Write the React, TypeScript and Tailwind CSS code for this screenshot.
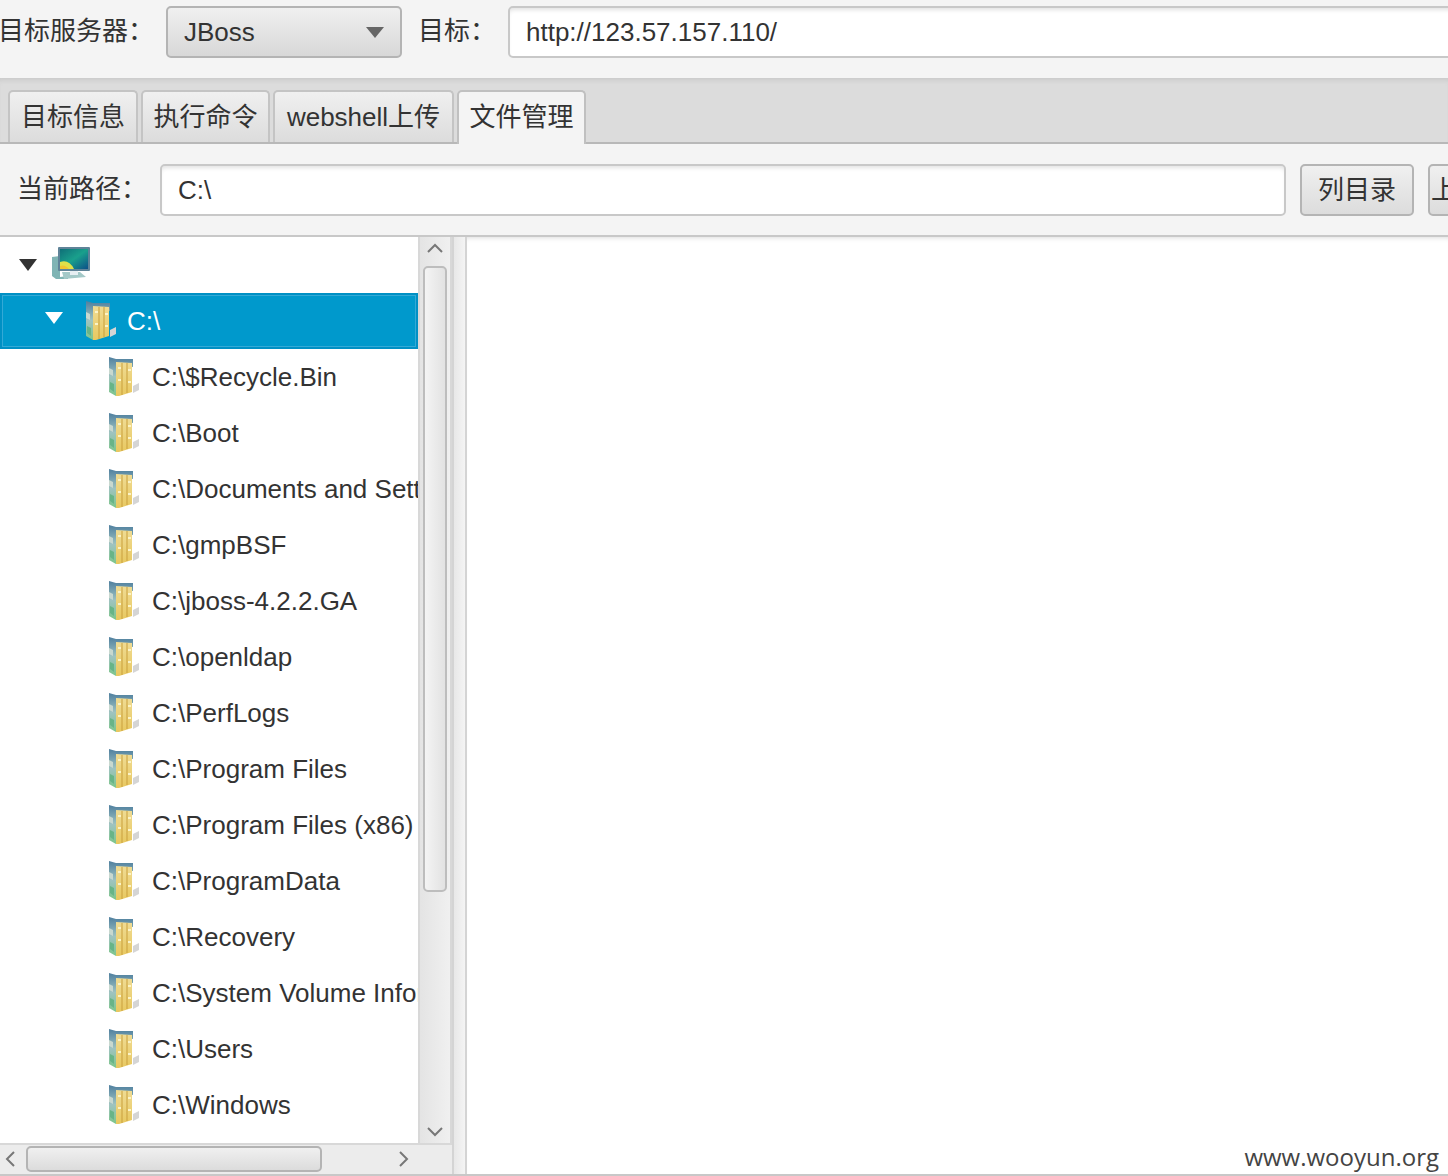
import React from "react";

const FONT = "font-['Liberation_Sans','Noto_Sans_CJK_SC',sans-serif]";

const folders = [
  "C:\\$Recycle.Bin",
  "C:\\Boot",
  "C:\\Documents and Settings",
  "C:\\gmpBSF",
  "C:\\jboss-4.2.2.GA",
  "C:\\openldap",
  "C:\\PerfLogs",
  "C:\\Program Files",
  "C:\\Program Files (x86)",
  "C:\\ProgramData",
  "C:\\Recovery",
  "C:\\System Volume Information",
  "C:\\Users",
  "C:\\Windows",
];

function FolderIcon({ id }: { id: string }) {
  return (
    <svg width="34" height="42" viewBox="0 0 34 42" className="shrink-0 blur-[0.6px]">
      <defs>
        <linearGradient id={`side${id}`} x1="0" y1="0" x2="0" y2="1">
          <stop offset="0" stopColor="#4f7f9f" />
          <stop offset="0.5" stopColor="#9fc3c0" />
          <stop offset="1" stopColor="#7cc58a" />
        </linearGradient>
        <linearGradient id={`body${id}`} x1="0" y1="0" x2="0" y2="1">
          <stop offset="0" stopColor="#f0dc94" />
          <stop offset="1" stopColor="#e8c860" />
        </linearGradient>
      </defs>
      <path d="M27 30 L33 27 L33 34 L27 37 Z" fill="#d5d5d5" />
      <path d="M3 1 L10 3 L27 3 L27 11 L10 8 L10 40 L3 36 Z" fill={`url(#side${id})`} />
      <path d="M10 6 L26 7 L26 36 L13 40 L10 40 Z" fill={`url(#body${id})`} />
      <path d="M16 7 L16 39 M21 7 L21 37" stroke="#c99f3c" strokeWidth="1" fill="none" />
      <path d="M12 12 L15 12 M22 14 L25 14 M12 24 L15 24 M22 26 L25 26" stroke="#fbf3c8" strokeWidth="2" />
      <path d="M3 12 L7 14 L7 20 L3 18 Z" fill="#c8d8cf" />
      <path d="M4 26 L8 28 L8 36 L4 33 Z" fill="#68b487" />
    </svg>
  );
}

function ComputerIcon() {
  return (
    <svg width="42" height="38" viewBox="0 0 42 38" className="shrink-0 blur-[0.5px]">
      <defs>
        <linearGradient id="screen" x1="0" y1="0" x2="1" y2="1">
          <stop offset="0" stopColor="#0f6f78" />
          <stop offset="0.5" stopColor="#1aa08c" />
          <stop offset="1" stopColor="#0c4f88" />
        </linearGradient>
      </defs>
      <path d="M2 12 L10 11 L10 32 L18 31 L18 34 L6 34 L2 31 Z" fill="#7fb4b4" />
      <path d="M12 27 L30 27 L36 32 L14 34 Z" fill="#a4c9c8" />
      <rect x="20" y="25" width="8" height="5" fill="#e6eef2" />
      <rect x="8" y="2" width="32" height="24" rx="1" fill="#5f8398" />
      <rect x="10" y="4" width="28" height="20" fill="url(#screen)" />
      <path d="M10 17 Q19 14 24 24 L10 24 Z" fill="#dfe04a" />
      <path d="M10 21 Q15 19 19 24 L10 24 Z" fill="#f2c530" />
    </svg>
  );
}

function Tri({ white }: { white?: boolean }) {
  return (
    <svg width="18" height="12" viewBox="0 0 18 12" className="shrink-0">
      <path d="M0 0 H18 L9 12 Z" fill={white ? "#ffffff" : "#333333"} />
    </svg>
  );
}

function Chevron({ d }: { d: string }) {
  return (
    <svg width="18" height="18" viewBox="0 0 18 18" className="shrink-0">
      <path d={d} fill="none" stroke="#777777" strokeWidth="2" />
    </svg>
  );
}

function TextInput({ value, className }: { value: string; className: string }) {
  return (
    <div
      className={`flex h-[52px] items-center rounded-[5px] border-2 border-[#c8c8c8] bg-white pl-4 text-[#333] shadow-[inset_0_4px_4px_-2px_#e2e2e2] ${className}`}
    >
      {value}
    </div>
  );
}

function Tab({ label, active, w }: { label: string; active?: boolean; w: string }) {
  return (
    <div
      className={`flex items-center justify-center rounded-t-[5px] border-2 text-[#333] ${w} ${
        active
          ? "z-10 -mb-[2px] h-[54px] border-[#c0c0c0] border-b-0 bg-[#f4f4f4] pb-[2px]"
          : "h-[52px] border-[#c4c4c4] border-b-0 bg-gradient-to-b from-[#f0f0f0] to-[#dcdcdc]"
      }`}
    >
      {label}
    </div>
  );
}

export default function App() {
  return (
    <div className={`flex h-[1176px] w-[1448px] flex-col overflow-hidden bg-[#f4f4f4] text-[26px] leading-none ${FONT}`}>
      {/* target row */}
      <div className="flex h-[78px] shrink-0 items-start pt-[6px]">
        <div className="flex h-[52px] w-[166px] shrink-0 items-center overflow-hidden whitespace-nowrap pb-[2px] text-[#333]">
          <span className="-ml-[2px]">目标服务器：</span>
        </div>
        <div className="flex h-[52px] w-[236px] shrink-0 items-center justify-between rounded-[5px] border-2 border-[#b4b4b4] bg-gradient-to-b from-[#f0f0f0] to-[#d8d8d8] pl-4 pr-[16px] text-[#333]">
          JBoss
          <svg width="18" height="11" viewBox="0 0 18 11">
            <path d="M0 0 H18 L9 11 Z" fill="#666666" />
          </svg>
        </div>
        <div className="flex h-[52px] w-[106px] shrink-0 items-center whitespace-nowrap pb-[2px] pl-4 text-[#333]">目标：</div>
        <TextInput value="http://123.57.157.110/" className="w-[960px] shrink-0" />
      </div>

      {/* tab strip */}
      <div className="flex h-[66px] shrink-0 items-end gap-[3px] border-b-2 border-[#b8b8b8] bg-[#dcdcdc] pl-2 shadow-[inset_0_5px_5px_-3px_#c8c8c8]">
        <Tab label="目标信息" w="w-[130px]" />
        <Tab label="执行命令" w="w-[129px]" />
        <Tab label="webshell上传" w="w-[181px]" />
        <Tab label="文件管理" w="w-[129px]" active />
      </div>

      {/* path row */}
      <div className="flex h-[93px] shrink-0 items-start border-b-2 border-[#c8c8c8] pt-[20px]">
        <div className="flex h-[52px] w-[160px] shrink-0 items-center whitespace-nowrap pb-[2px] pl-[17px] text-[#333]">当前路径：</div>
        <TextInput value="C:\" className="w-[1126px] shrink-0" />
        <div className="ml-[14px] flex h-[52px] w-[114px] shrink-0 items-center justify-center rounded-[5px] border-2 border-[#b4b4b4] bg-gradient-to-b from-[#f0f0f0] to-[#dcdcdc] text-[#333]">
          列目录
        </div>
        <div className="ml-[14px] flex h-[52px] w-[114px] shrink-0 items-center rounded-[5px] border-2 border-[#b4b4b4] bg-gradient-to-b from-[#f0f0f0] to-[#dcdcdc] pl-[1px] text-[#333]">
          上传
        </div>
      </div>

      {/* split panes */}
      <div className="flex min-h-0 flex-1 border-b-2 border-[#c8c8c8]">
        <div className="flex w-[452px] shrink-0 flex-col">
          <div className="flex min-h-0 flex-1">
            {/* tree */}
            <div className="w-[418px] shrink-0 overflow-hidden bg-white text-[#333]">
              <div className="flex h-[56px] items-center pl-[19px]">
                <Tri />
                <span className="ml-[13px] -mt-[2px]"><ComputerIcon /></span>
              </div>
              <div className="flex h-[56px] items-center border-2 border-[#0090c4] bg-[#0099cc] pl-[43px] text-white shadow-[inset_0_0_0_1px_#33a9d6]">
                <span className="-mt-[6px]"><Tri white /></span>
                <span className="ml-[20px]"><FolderIcon id="root" /></span>
                <span className="ml-[10px] whitespace-nowrap">C:\</span>
              </div>
              {folders.map((f, i) => (
                <div key={f} className="flex h-[56px] items-center overflow-hidden whitespace-nowrap pl-[106px]">
                  <FolderIcon id={String(i)} />
                  <span className="ml-[12px]">{f}</span>
                </div>
              ))}
            </div>
            {/* vertical scrollbar */}
            <div className="flex w-[34px] shrink-0 flex-col items-center border-x-2 border-[#d8d8d8] bg-gradient-to-r from-[#e4e4e4] to-[#f0f0f0] pt-[3px]">
              <Chevron d="M2 12 L9 5 L16 12" />
              <div className="mt-[8px] h-[626px] w-[24px] shrink-0 rounded-[5px] border-2 border-[#bdbdbd] bg-gradient-to-r from-[#f4f4f4] to-[#e2e2e2]" />
              <div className="mt-auto mb-[3px]">
                <Chevron d="M2 6 L9 13 L16 6" />
              </div>
            </div>
          </div>
          {/* horizontal scrollbar */}
          <div className="flex h-[31px] shrink-0 items-center border-t-2 border-[#d8d8d8] bg-[#ececec] pb-[1px]">
            <span className="ml-[1px]"><Chevron d="M13 2 L6 9 L13 16" /></span>
            <div className="ml-[7px] h-[26px] w-[296px] shrink-0 rounded-[5px] border-2 border-[#b4b4b4] bg-gradient-to-b from-[#f0f0f0] to-[#dcdcdc]" />
            <span className="ml-[73px]"><Chevron d="M5 2 L12 9 L5 16" /></span>
          </div>
        </div>
        {/* divider */}
        <div className="w-[15px] shrink-0 border-l-2 border-r-2 border-[#d4d4d4] bg-gradient-to-r from-[#e8e8e8] to-[#f4f4f4]" />
        {/* right pane */}
        <div className="relative min-w-0 flex-1 bg-white shadow-[inset_0_5px_5px_-4px_#dddddd]">
          <span className="absolute bottom-[2px] right-[9px] font-['Open_Sans',sans-serif] text-[24px] leading-[30px] text-[#444]">
            www.wooyun.org
          </span>
        </div>
      </div>
    </div>
  );
}
